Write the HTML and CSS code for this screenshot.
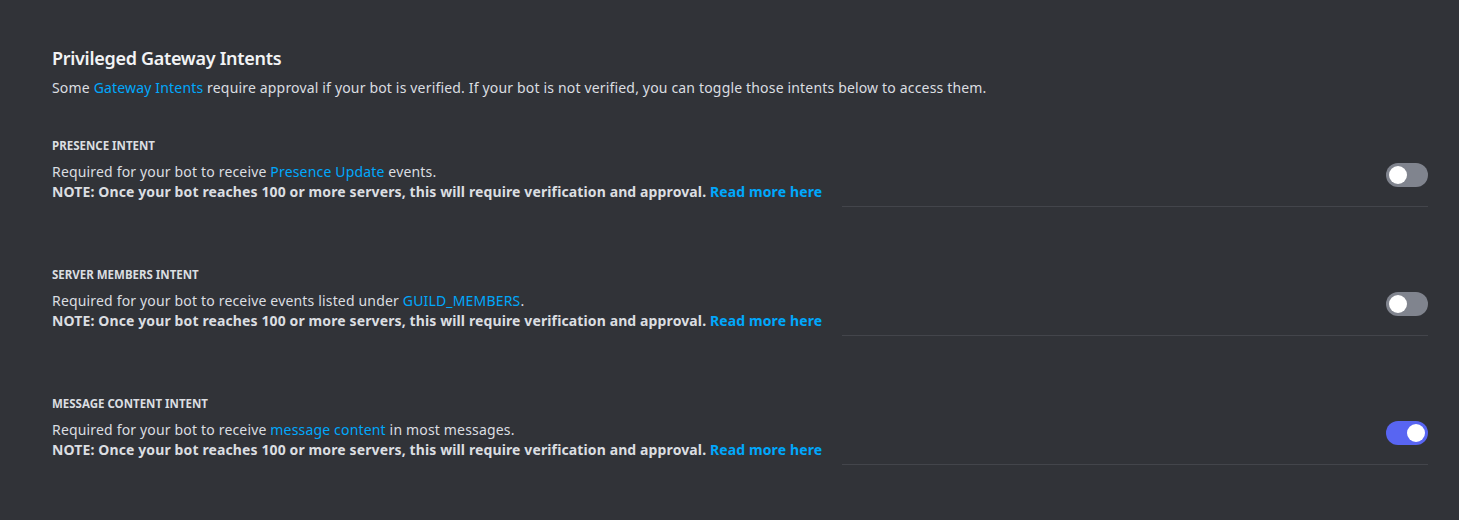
FILE: index.html
```html
<!DOCTYPE html>
<html>
<head>
<meta charset="utf-8">
<link rel="stylesheet" href="styles.css">
</head>
<body>
<main class="page">
  <h2 class="title">Privileged Gateway Intents</h2>
  <p class="desc">Some <a class="link">Gateway Intents</a> require approval if your bot is verified. If your bot is not verified, you can toggle those intents below to access them.</p>

  <section class="intent">
    <h3 class="intent-name">PRESENCE INTENT</h3>
    <div class="intent-row">
      <div class="intent-text">
        <div class="line">Required for your bot to receive <a class="link">Presence Update</a> events.</div>
        <div class="line note">NOTE: Once your bot reaches 100 or more servers, this will require verification and approval. <a class="link">Read more here</a></div>
      </div>
      <div class="intent-side">
        <span class="toggle"><span class="knob"></span></span>
      </div>
    </div>
  </section>

  <section class="intent">
    <h3 class="intent-name">SERVER MEMBERS INTENT</h3>
    <div class="intent-row">
      <div class="intent-text">
        <div class="line">Required for your bot to receive events listed under <a class="link">GUILD_MEMBERS</a>.</div>
        <div class="line note">NOTE: Once your bot reaches 100 or more servers, this will require verification and approval. <a class="link">Read more here</a></div>
      </div>
      <div class="intent-side">
        <span class="toggle"><span class="knob"></span></span>
      </div>
    </div>
  </section>

  <section class="intent">
    <h3 class="intent-name">MESSAGE CONTENT INTENT</h3>
    <div class="intent-row">
      <div class="intent-text">
        <div class="line">Required for your bot to receive <a class="link">message content</a> in most messages.</div>
        <div class="line note">NOTE: Once your bot reaches 100 or more servers, this will require verification and approval. <a class="link">Read more here</a></div>
      </div>
      <div class="intent-side">
        <span class="toggle on"><span class="knob"></span></span>
      </div>
    </div>
  </section>
</main>
</body>
</html>
```

FILE: styles.css
```css
html, body {
  margin: 0;
  padding: 0;
  background: #313338;
}
body {
  font-family: "Noto Sans", "Open Sans", sans-serif;
  color: #dbdee1;
  width: 1459px;
  height: 520px;
  overflow: hidden;
}
.page {
  padding: 45px 31px 0 52px;
}
.title {
  margin: 0;
  font-size: 18px;
  line-height: 26px;
  font-weight: 600;
  letter-spacing: -0.3px;
  color: #f2f3f5;
}
.desc {
  margin: 7px 0 0;
  font-size: 14px;
  line-height: 20px;
  letter-spacing: 0.17px;
}
.link {
  color: #00a8fc;
  cursor: pointer;
}
.intent {
  margin-top: 40px;
}
.intent + .intent {
  margin-top: 60px;
}
.intent-name {
  margin: 0;
  font-size: 11.5px;
  line-height: 16px;
  font-weight: 700;
  color: #dbdee1;
}
.intent-row {
  display: flex;
  gap: 20px;
  margin-top: 8px;
}
.intent-text {
  font-size: 14px;
  line-height: 20px;
  padding-bottom: 5px;
  letter-spacing: 0.17px;
}
.note {
  font-weight: 700;
  letter-spacing: 0.12px;
}
.intent-side {
  flex: 1;
  display: flex;
  justify-content: flex-end;
  align-items: flex-start;
  border-bottom: 1px solid #43454b;
}
.toggle {
  display: flex;
  align-items: center;
  width: 42px;
  height: 24px;
  border-radius: 12px;
  background: #80848e;
  margin-top: 1px;
  padding: 0 3px;
  box-sizing: border-box;
}
.knob {
  width: 18px;
  height: 18px;
  border-radius: 50%;
  background: #fff;
}
.toggle.on {
  background: #5865f2;
  justify-content: flex-end;
}
```
